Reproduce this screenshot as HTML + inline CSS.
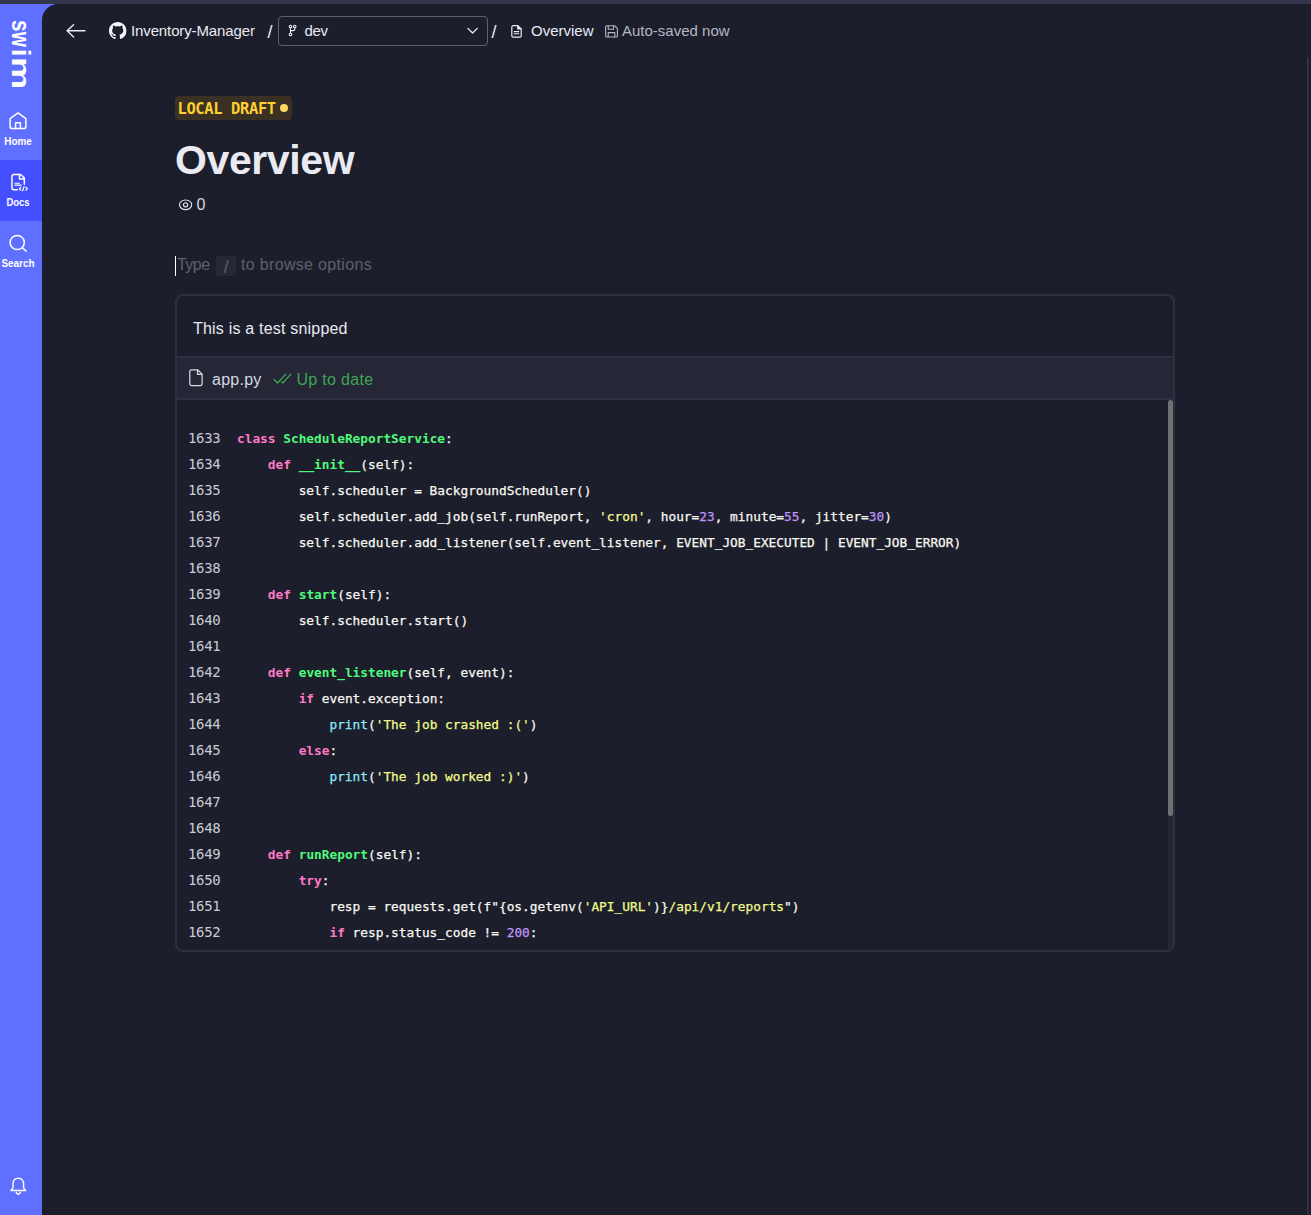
<!DOCTYPE html>
<html lang="en">
<head>
<meta charset="utf-8">
<title>Overview - Swimm</title>
<style>
*{box-sizing:border-box;margin:0;padding:0}
html,body{width:1311px;height:1215px;overflow:hidden;background:#1d1e2b}
body{position:relative;font-family:"Liberation Sans",sans-serif;color:#e9eaf2}
.abs{position:absolute}
#topstrip{left:0;top:0;width:1311px;height:4px;background:#33364a}
#sidebar{left:0;top:4px;width:58px;height:1211px;background:#5f6fff}
#main{left:42px;top:4px;width:1269px;height:1211px;background:#1d1e2b;border-top-left-radius:16px}
.nav{left:-4px;width:44px;text-align:center;color:#fff;font-size:11px;font-weight:bold;line-height:12px;white-space:nowrap}
svg{position:absolute;overflow:visible}
#docsbg{left:0;top:160px;width:42px;height:61px;background:#4450ff}
.t{white-space:nowrap;line-height:20px}
#crumbs .t{font-size:15px;color:#e9eaf2}
#branch{left:278px;top:16px;width:210px;height:30px;border:1px solid #5d5f6d;border-radius:4px}
#badge{left:175px;top:96px;width:117px;height:24px;background:#3a3024;border-radius:4px}
#badge .t{left:2.500px;top:3px;font-family:"DejaVu Sans Mono","Liberation Mono",monospace;font-weight:bold;font-size:15.5px;color:#ffd02e;letter-spacing:-.4px}
#dot{left:280px;top:104px;width:8px;height:8px;border-radius:50%;background:#ffd95e}
h1{left:175px;top:134px;font-size:41px;line-height:52px;font-weight:bold;color:#e9eaf2;white-space:nowrap;letter-spacing:-.4px}
#snip{left:175px;top:294px;width:1000px;height:658px;border:2px solid #2d2f42;border-radius:8px;overflow:hidden}
#filehdr{left:0;top:60px;width:996px;height:44px;background:#252736;border-top:2px solid #2d2f42;border-bottom:2px solid #2d2f42}
#code{left:0;top:104px;width:996px;height:550px;overflow:hidden}
.ln,.cl{position:absolute;white-space:pre;font-size:12.8px;line-height:26px;height:26px}
.ln{left:11px;margin-top:-1px;font-family:"DejaVu Sans Mono","Liberation Mono",monospace;color:#c9cbd6;letter-spacing:-.35px;font-size:14px}
.cl{left:60px;-webkit-text-stroke:.25px;font-family:"DejaVu Sans Mono","Liberation Mono",monospace;color:#f8f8f2}
.k{color:#ff79c6;font-weight:bold;-webkit-text-stroke:0}
.f{color:#50fa7b;font-weight:bold;-webkit-text-stroke:0}
.s{color:#f1fa8c}
.n{color:#bd93f9}
.b{color:#8be9fd}
#ctrack{left:1168px;top:400px;width:5px;height:550px;background:#242636}
#cscroll{left:1168px;top:400px;width:5px;height:416px;background:#6f7072;border-radius:2.5px}
#pscroll{left:1307px;top:57px;width:2px;height:1158px;background:#2f3147}
</style>
</head>
<body>
<div class="abs" id="topstrip"></div>
<div class="abs" id="sidebar"></div>
<div class="abs" id="main"></div>

<!-- sidebar -->
<div class="abs" id="docsbg"></div>
<svg id="logo" style="left:0;top:0" width="42" height="100" viewBox="0 0 42 100" role="img" aria-label="swim"><title>swim</title><text transform="translate(11.900,20.400) rotate(90)" font-family="Liberation Sans, sans-serif" font-weight="bold" font-size="26.500" fill="#fff"><tspan x="-0.500" textLength="11.500" lengthAdjust="spacingAndGlyphs">s</tspan><tspan x="11.400" textLength="15.200" lengthAdjust="spacingAndGlyphs">w</tspan><tspan x="28.500">i</tspan><tspan x="36.600" textLength="32.300" lengthAdjust="spacingAndGlyphs">m</tspan></text></svg>
<svg style="left:9px;top:112px" width="18" height="18" viewBox="0 0 18 18" fill="none" stroke="#fff" stroke-width="1.500" stroke-linejoin="round" stroke-linecap="round"><path d="M1.100 6.700 L9 0.900 L16.900 6.700 V14.400 a2.200 2.200 0 0 1 -2.200 2.200 H3.300 a2.200 2.200 0 0 1 -2.200 -2.200 Z"/><path d="M6.600 16.500 V10.800 H11.400 V16.500"/></svg>
<svg style="left:11px;top:172.600px" width="17.500" height="17.500" viewBox="0 0 18 18" fill="none" stroke="#fff" stroke-width="1.500" stroke-linejoin="round" stroke-linecap="round"><path d="M6.500 17.200 H3 a2 2 0 0 1 -2 -2 V3.500 a2 2 0 0 1 2 -2 H10 L13.700 5 V11.500"/><path d="M8.700 1.700 V6.200 H13.500"/><path d="M4 10.500 H8.600 M4 12.500 H10.600" stroke-width="1.100"/><path d="M10.200 14.600 L8.600 16.200 L10.200 17.800 M15.200 14.600 L16.800 16.200 L15.200 17.800 M13.400 14.200 L12 18.200" stroke-width="1.200"/></svg>
<svg style="left:9px;top:234px" width="19" height="19" viewBox="0 0 19 19" fill="none" stroke="#fff" stroke-width="1.500" stroke-linecap="round"><circle cx="8.200" cy="8.500" r="7.100"/><path d="M13.400 13.800 L17.100 17.100"/></svg>
<svg style="left:10px;top:1177px" width="17" height="19" viewBox="0 0 17 19" fill="none" stroke="#fff" stroke-width="1.400" stroke-linejoin="round" stroke-linecap="round"><path d="M8.300 1.200 C4.800 1.200 3 3.800 3 7 V10.800 L1 13.500 H15.600 L13.600 10.800 V7 C13.600 3.800 11.800 1.200 8.300 1.200 Z"/><path d="M6.200 15.300 C6.600 16.700 7.400 17.200 8.300 17.200 C9.200 17.200 10 16.700 10.400 15.300"/></svg>
<div class="abs nav" style="top:135px;transform:scaleX(.9)">Home</div>
<div class="abs nav" style="top:196px;transform:scaleX(.86)">Docs</div>
<div class="abs nav" style="top:257px;transform:scaleX(.9)">Search</div>

<!-- breadcrumbs -->
<svg style="left:66px;top:23px" width="20" height="16" viewBox="0 0 20 16" fill="none" stroke="#e9eaf2" stroke-width="1.400" stroke-linecap="round" stroke-linejoin="round"><path d="M7.600 1.700 L1.100 7.800 L7.600 13.900 M1.300 7.800 H19"/></svg>
<svg style="left:108.600px;top:21.900px" width="17.400" height="17.400" viewBox="0 0 16 16" fill="#f4f5fa"><path d="M8 0C3.580 0 0 3.580 0 8c0 3.540 2.290 6.530 5.470 7.590.4.070.55-.17.550-.38 0-.19-.01-.82-.01-1.490-2.010.37-2.530-.49-2.690-.94-.09-.23-.48-.94-.82-1.130-.28-.15-.68-.52-.01-.53.630-.01 1.080.58 1.230.82.720 1.210 1.870.87 2.330.66.070-.52.280-.87.510-1.070-1.780-.2-3.640-.89-3.640-3.950 0-.87.310-1.590.82-2.150-.08-.2-.36-1.020.08-2.120 0 0 .67-.21 2.200.82.640-.18 1.320-.27 2-.27s1.360.09 2 .27c1.530-1.040 2.200-.82 2.200-.82.440 1.100.16 1.920.08 2.120.51.560.82 1.270.82 2.150 0 3.070-1.870 3.750-3.650 3.950.29.250.54.730.54 1.480 0 1.070-.01 1.930-.01 2.200 0 .21.150.46.550.38A8.013 8.013 0 0 0 16 8c0-4.420-3.580-8-8-8z"/></svg>
<svg style="left:288px;top:24px" width="10" height="13" viewBox="0 0 10 13" fill="none" stroke="#e9eaf2" stroke-width="1.100"><circle cx="2.500" cy="2.500" r="1.300"/><circle cx="6.700" cy="2.500" r="1.300"/><circle cx="2.500" cy="10.500" r="1.300"/><path d="M2.500 3.800 V9.200 M6.700 3.800 V5.400 a1.200 1.200 0 0 1 -1.200 1.200 H2.500"/></svg>
<svg style="left:466px;top:26px" width="13" height="9" viewBox="0 0 13 9" fill="none" stroke="#e9eaf2" stroke-width="1.300" stroke-linecap="round" stroke-linejoin="round"><path d="M1.900 2.400 L6.600 7 L11.300 2.400"/></svg>
<svg style="left:511px;top:25px" width="11" height="13" viewBox="0 0 11 13" fill="none" stroke="#e9eaf2" stroke-width="1.200" stroke-linejoin="round" stroke-linecap="round"><path d="M2.200 0.700 H6.800 L10.200 4 V10.800 a1.400 1.400 0 0 1 -1.400 1.400 H2.200 a1.400 1.400 0 0 1 -1.400 -1.400 V2.100 a1.400 1.400 0 0 1 1.400 -1.400 Z"/><path d="M3.200 6.600 H7.800 M3.200 8.700 H7.800" stroke-width="1.100"/><path d="M6.800 0.700 V4 H10.200" fill="#e9eaf2"/></svg>
<svg style="left:605px;top:25px" width="13" height="13" viewBox="0 0 13 13" fill="none" stroke="#b4b6c4" stroke-width="1.100" stroke-linejoin="round"><path d="M1.800 0.700 H9.600 L12.400 3.500 V10.800 a1.200 1.200 0 0 1 -1.200 1.200 H1.800 a1.200 1.200 0 0 1 -1.200 -1.200 V1.900 a1.200 1.200 0 0 1 1.200 -1.200 Z"/><path d="M3.200 0.900 V4.200 H8.600 V0.900 M3.200 12 V7.600 H9.800 V12"/></svg>

<div id="crumbs">
<div class="abs t" style="left:131px;top:21px;letter-spacing:-.12px">Inventory-Manager</div>
<div class="abs t" style="left:267.500px;top:22px;font-size:18px">/</div>
<div class="abs" id="branch"></div>
<div class="abs t" style="left:304.500px;top:21px;letter-spacing:-.3px">dev</div>
<div class="abs t" style="left:491.500px;top:22px;font-size:18px">/</div>
<div class="abs t" style="left:531px;top:21px">Overview</div>
<div class="abs t" style="left:622px;top:21px;color:#b4b6c4">Auto-saved now</div>
</div>

<!-- doc header -->
<div class="abs" id="badge"><div class="abs t">LOCAL DRAFT</div></div>
<div class="abs" id="dot"></div>
<h1 class="abs">Overview</h1>
<svg style="left:179px;top:199px" width="14" height="12" viewBox="0 0 14 12" fill="none" stroke="#e2e4ee" stroke-width="1.150"><ellipse cx="6.600" cy="5.800" rx="6.100" ry="4.800"/><circle cx="6.600" cy="5.800" r="2.100"/></svg>
<div class="abs t" style="left:196.500px;top:195px;font-size:16px;color:#d5d7e2">0</div>

<div class="abs" style="left:175px;top:256px;width:1px;height:20px;background:#fff"></div>
<div class="abs t" style="left:177px;top:255px;font-size:16px;letter-spacing:-.55px;color:#5e6070">Type</div>
<div class="abs" style="left:216px;top:256px;width:20px;height:20px;background:#262838;border-radius:3px"></div>
<div class="abs t" style="left:223.700px;top:257px;font-size:17.500px;color:#5e6070">/</div>
<div class="abs t" style="left:241px;top:255px;font-size:16px;letter-spacing:.33px;color:#5e6070">to browse options</div>

<!-- snippet -->
<div class="abs" id="snip">
<div class="abs t" style="left:16px;top:23px;font-size:16px;letter-spacing:.2px;color:#e9eaf2">This is a test snipped</div>
<div class="abs" id="filehdr">
<svg style="left:12px;top:10.800px" width="14.500" height="17.300" viewBox="0 0 15 18" fill="none" stroke="#d5d7e2" stroke-width="1.300" stroke-linejoin="round"><path d="M2.600 0.800 H9 L13.600 5.400 V15.400 a1.800 1.800 0 0 1 -1.800 1.800 H2.600 a1.800 1.800 0 0 1 -1.800 -1.800 V2.600 a1.800 1.800 0 0 1 1.800 -1.800 Z"/><path d="M8.800 1 V5.600 H13.400"/></svg>
<svg style="left:96px;top:15px" width="19.500" height="11.500" viewBox="0 0 20 12" fill="none" stroke="#3fa552" stroke-width="1.400" stroke-linecap="round" stroke-linejoin="round"><path d="M1 6.800 L4.600 10.400 L13.200 1.200 M9 9.400 L10 10.400 L18.400 1.200"/></svg>
<div class="abs t" style="left:35px;top:12px;font-size:16px;letter-spacing:.25px;color:#d5d7e2">app.py</div>
<div class="abs t" style="left:119.500px;top:12px;font-size:16px;letter-spacing:.3px;color:#3fa552">Up to date</div>
</div>
<div class="abs" id="code">
<div class="ln" style="top:26px">1633</div><div class="cl" style="top:26px"><span class="k">class</span> <span class="f">ScheduleReportService</span>:</div>
<div class="ln" style="top:52px">1634</div><div class="cl" style="top:52px">    <span class="k">def</span> <span class="f">__init__</span>(self):</div>
<div class="ln" style="top:78px">1635</div><div class="cl" style="top:78px">        self.scheduler = BackgroundScheduler()</div>
<div class="ln" style="top:104px">1636</div><div class="cl" style="top:104px">        self.scheduler.add_job(self.runReport, <span class="s">'cron'</span>, hour=<span class="n">23</span>, minute=<span class="n">55</span>, jitter=<span class="n">30</span>)</div>
<div class="ln" style="top:130px">1637</div><div class="cl" style="top:130px">        self.scheduler.add_listener(self.event_listener, EVENT_JOB_EXECUTED | EVENT_JOB_ERROR)</div>
<div class="ln" style="top:156px">1638</div><div class="cl" style="top:156px"></div>
<div class="ln" style="top:182px">1639</div><div class="cl" style="top:182px">    <span class="k">def</span> <span class="f">start</span>(self):</div>
<div class="ln" style="top:208px">1640</div><div class="cl" style="top:208px">        self.scheduler.start()</div>
<div class="ln" style="top:234px">1641</div><div class="cl" style="top:234px"></div>
<div class="ln" style="top:260px">1642</div><div class="cl" style="top:260px">    <span class="k">def</span> <span class="f">event_listener</span>(self, event):</div>
<div class="ln" style="top:286px">1643</div><div class="cl" style="top:286px">        <span class="k">if</span> event.exception:</div>
<div class="ln" style="top:312px">1644</div><div class="cl" style="top:312px">            <span class="b">print</span>(<span class="s">'The job crashed :('</span>)</div>
<div class="ln" style="top:338px">1645</div><div class="cl" style="top:338px">        <span class="k">else</span>:</div>
<div class="ln" style="top:364px">1646</div><div class="cl" style="top:364px">            <span class="b">print</span>(<span class="s">'The job worked :)'</span>)</div>
<div class="ln" style="top:390px">1647</div><div class="cl" style="top:390px"></div>
<div class="ln" style="top:416px">1648</div><div class="cl" style="top:416px"></div>
<div class="ln" style="top:442px">1649</div><div class="cl" style="top:442px">    <span class="k">def</span> <span class="f">runReport</span>(self):</div>
<div class="ln" style="top:468px">1650</div><div class="cl" style="top:468px">        <span class="k">try</span>:</div>
<div class="ln" style="top:494px">1651</div><div class="cl" style="top:494px">            resp = requests.get(f"{os.getenv(<span class="s">'API_URL'</span>)}<span class="s">/api/v1/reports</span>")</div>
<div class="ln" style="top:520px">1652</div><div class="cl" style="top:520px">            <span class="k">if</span> resp.status_code != <span class="n">200</span>:</div>
</div>
</div>
<div class="abs" id="ctrack"></div>
<div class="abs" id="cscroll"></div>
<div class="abs" id="pscroll"></div>
</body>
</html>
